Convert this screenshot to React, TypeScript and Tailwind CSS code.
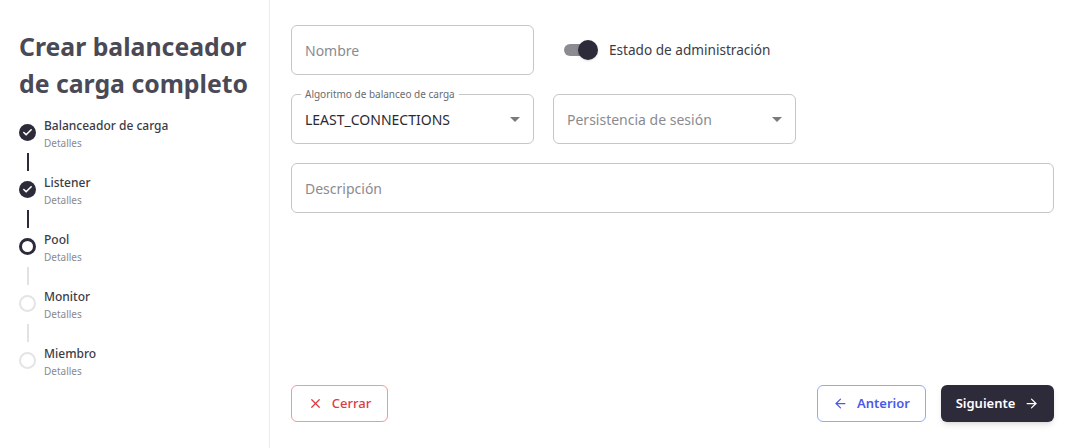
import { Check, X, ArrowLeft, ArrowRight } from "lucide-react";

type StepState = "done" | "active" | "todo";

const steps: { title: string; state: StepState }[] = [
  { title: "Balanceador de carga", state: "done" },
  { title: "Listener", state: "done" },
  { title: "Pool", state: "active" },
  { title: "Monitor", state: "todo" },
  { title: "Miembro", state: "todo" },
];

const StepIcon = ({ state }: { state: StepState }) => {
  if (state === "done")
    return (
      <div className="w-[17px] h-[17px] rounded-full bg-[#2d2b3a] flex items-center justify-center">
        <Check size={11} strokeWidth={3.5} className="text-white" />
      </div>
    );
  if (state === "active")
    return <div className="w-[17px] h-[17px] rounded-full border-[3.5px] border-[#2d2b3a]" />;
  return <div className="w-[17px] h-[17px] rounded-full border-2 border-[#e4e4e6]" />;
};

const Stepper = () => (
  <div className="flex flex-col mt-[15px]">
    {steps.map((step, i) => {
      const last = i === steps.length - 1;
      const lineColor = steps[i + 1]?.state === "todo" ? "bg-[#e2e2e4]" : "bg-[#2d2b3a]";
      return (
        <div key={step.title} className={`flex gap-[8px] ${last ? "" : "h-[57px]"}`}>
          <div className="flex flex-col items-center w-[17px] pt-[7px]">
            <StepIcon state={step.state} />
            {!last && <div className={`w-[2px] h-[18px] mt-[12px] ${lineColor}`} />}
          </div>
          <div className="flex flex-col">
            <span className="text-[12px] leading-[17px] text-[#3c3b45] font-medium">{step.title}</span>
            <span className="text-[10px] leading-[17px] mt-[1px] text-[#8a8a90]">Detalles</span>
          </div>
        </div>
      );
    })}
  </div>
);

const Caret = () => (
  <svg width="10" height="5" viewBox="0 0 10 5" className="ml-auto">
    <path d="M0 0 L10 0 L5 5 Z" fill="#7b7b7f" />
  </svg>
);

const App = () => {
  return (
    <div
      className="flex w-[1072px] h-[448px] bg-white overflow-hidden"
      style={{ fontFamily: '"Noto Sans", "Open Sans", sans-serif' }}
    >
      <aside className="w-[270px] shrink-0 border-r border-[#ececee] pl-[19px] pt-[28px]">
        <h1 className="text-[24.8px] leading-[37px] font-bold text-[#4a4956]">
          Crear balanceador
          <br />
          de carga completo
        </h1>
        <Stepper />
      </aside>

      <main className="flex-1 flex flex-col pl-[21px] pr-[18px] pt-[25px] pb-[26px]">
        <div className="flex flex-col gap-[19px]">
          <div className="flex gap-[19px]">
            <div className="w-[243px] h-[50px] rounded-[6px] border border-[#c6c6c8] flex items-center px-[13px]">
              <span className="text-[14px] text-[#8b8b8f]">Nombre</span>
            </div>
            <div className="flex items-center pl-[11px]">
              <div className="relative w-[34px] h-[20px] flex items-center">
                <div className="w-[28px] h-[12px] rounded-full bg-[#8c8b92]" />
                <div className="absolute right-0 w-[20px] h-[20px] rounded-full bg-[#2d2b3a] shadow" />
              </div>
              <span className="ml-[11px] text-[13.6px] text-[#3c3b45]">Estado de administración</span>
            </div>
          </div>

          <div className="flex gap-[19px]">
            <div className="relative w-[243px] h-[50px] rounded-[6px] border border-[#c6c6c8] flex items-center pl-[13px] pr-[13px]">
              <span className="absolute -top-[7px] left-[9px] bg-white px-[4px] text-[10px] leading-[12px] text-[#6b6b70]">
                Algoritmo de balanceo de carga
              </span>
              <span className="text-[14px] text-[#2b2a33]">LEAST_CONNECTIONS</span>
              <Caret />
            </div>
            <div className="w-[243px] h-[50px] rounded-[6px] border border-[#c6c6c8] flex items-center pl-[13px] pr-[13px]">
              <span className="text-[14px] text-[#8b8b8f]">Persistencia de sesión</span>
              <Caret />
            </div>
          </div>

          <div className="w-full h-[50px] rounded-[6px] border border-[#c6c6c8] flex items-center px-[13px]">
            <span className="text-[14px] text-[#8b8b8f]">Descripción</span>
          </div>
        </div>

        <div className="mt-auto flex items-center">
          <button className="h-[37px] w-[97px] rounded-[6px] border border-[#ee9a9e] flex items-center justify-center gap-[9px] text-[#dc3a44] text-[13px] font-medium">
            <X size={15} strokeWidth={2} />
            Cerrar
          </button>
          <button className="ml-auto h-[37px] w-[109px] rounded-[6px] border border-[#97a4ff] flex items-center justify-center gap-[9px] text-[#4a5ae8] text-[13px] font-semibold">
            <ArrowLeft size={15} strokeWidth={2} />
            Anterior
          </button>
          <button className="ml-[15px] h-[37px] w-[113px] rounded-[6px] bg-[#2d2b3a] shadow-md flex items-center justify-center gap-[9px] text-white text-[13px] font-semibold">
            Siguiente
            <ArrowRight size={15} strokeWidth={2} />
          </button>
        </div>
      </main>
    </div>
  );
};

export default App;
